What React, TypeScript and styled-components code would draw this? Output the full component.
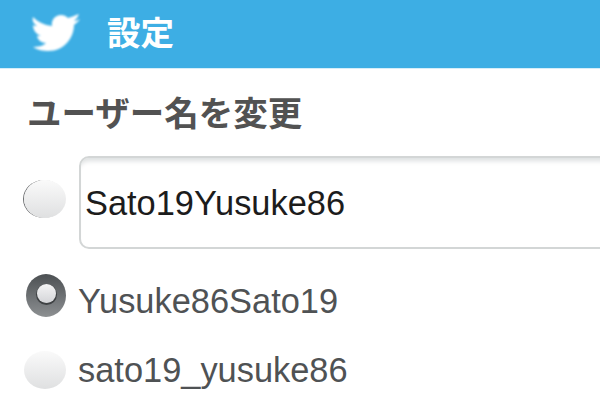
import styled, { createGlobalStyle } from 'styled-components'

const GlobalStyle = createGlobalStyle`
	html, body {
		margin: 0;
		padding: 0;
		height: 100%;
		background: #fff;
		overflow: hidden;
	}
`

const Page = styled.div`
	width: 600px;
	height: 400px;
	overflow: hidden;
	background: #fff;
	font-family: "Liberation Sans", "Noto Sans CJK JP", sans-serif;
`

const Header = styled.header`
	height: 68px;
	background: #3daee4;
	border-bottom: 1px solid #d5eef9;
	display: flex;
	align-items: center;
	padding-left: 32px;
	gap: 27px;
	color: #fff;
`

const Bird = styled.svg`
	flex: none;
	width: 48px;
	height: 38px;
	margin-top: -2px;
	fill: #fff;
	filter: blur(0.8px);
`

const HeaderTitle = styled.h1`
	margin: 0 0 7px;
	font-size: 33.5px;
	line-height: 40px;
	font-weight: 700;
	font-family: "Noto Sans CJK JP", sans-serif;
`

const Content = styled.main`
	padding: 20px 0 0 24px;
`

const SectionTitle = styled.h2`
	margin: 0 0 23px 3px;
	font-size: 34.5px;
	line-height: 44px;
	font-weight: 700;
	color: #525252;
	font-family: "Noto Sans CJK JP", sans-serif;
`

const InputRow = styled.div`
	display: flex;
	align-items: center;
	gap: 13px;
`

const Field = styled.div`
	flex: none;
	width: 560px;
	height: 93px;
	box-sizing: border-box;
	border: 2px solid #d3d6d6;
	border-radius: 10px;
	box-shadow: inset 0 7px 5px -4px #dcdfe0;
	display: flex;
	align-items: center;
	padding: 1px 0 0 4px;
	font-size: 34.4px;
	color: #1c1c1c;
`

const OptionList = styled.div`
	display: flex;
	flex-direction: column;
	gap: 31px;
	margin-top: 25px;
`

const Option = styled.div`
	display: flex;
	align-items: flex-start;
	gap: 12px;
	font-size: 34.4px;
	line-height: 38px;
	color: #4f5254;
`

const OptionLabel = styled.span<{ $drop?: boolean }>`
	padding-top: ${props => props.$drop ? '8px' : '0'};
`

const Radio = styled.span<{ $checked?: boolean; $edge?: boolean }>`
	flex: none;
	width: ${props => props.$checked ? '40px' : '42px'};
	height: ${props => props.$checked ? '43px' : '38px'};
	margin-left: ${props => props.$checked ? '2px' : '0'};
	margin-bottom: ${props => props.$edge ? '7px' : '0'};
	border-radius: 50%;
	display: flex;
	align-items: center;
	justify-content: center;
	background: ${props => props.$checked
		? 'linear-gradient(#4c5053, #8d9092)'
		: 'linear-gradient(#fafafa, #dfe0e1)'};
	box-shadow: ${props => props.$edge ? '-1px 0 0 #6a6c6e' : 'none'};
	filter: blur(0.4px);
`

const RadioDot = styled.span`
	width: 19px;
	height: 19px;
	margin-bottom: 4px;
	border-radius: 50%;
	background: linear-gradient(#f4f4f5, #d4d5d8);
	box-shadow: 0 1px 0 1px #3f4244;
`

export default function App() {
	return (
		<Page>
			<GlobalStyle />
			<Header>
				<Bird viewBox="0 0 48 38">
					<path d="M1 3c5 5 11 8 19 9-1-6 3-11 9-11 3 0 5 1 7 3 3-1 6-2 11-4-1 3-3 5-5 7 2 0 4-1 6-2-2 3-4 4-6 6 0 12-9 26-26 26-5 0-10-1-15-4 5 0 10-1 13-4-5 0-8-3-9-7h4C4 20 1 16 1 11c1 1 3 1 4 1C1 9 0 6 1 3z" />
				</Bird>
				<HeaderTitle>設定</HeaderTitle>
			</Header>
			<Content>
				<SectionTitle>ユーザー名を変更</SectionTitle>
				<InputRow>
					<Radio $edge />
					<Field>Sato19Yusuke86</Field>
				</InputRow>
				<OptionList>
					<Option>
						<Radio $checked><RadioDot /></Radio>
						<OptionLabel $drop>Yusuke86Sato19</OptionLabel>
					</Option>
					<Option>
						<Radio />
						<OptionLabel>sato19_yusuke86</OptionLabel>
					</Option>
				</OptionList>
			</Content>
		</Page>
	)
}
